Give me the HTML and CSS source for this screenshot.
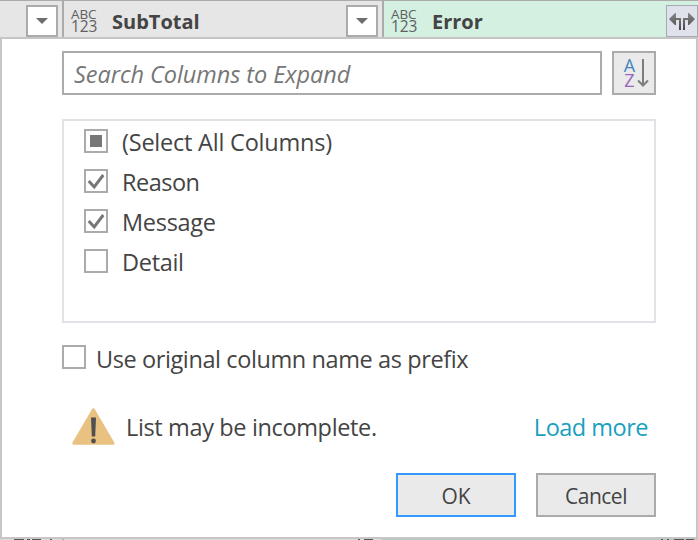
FILE: index.html
```html
<!DOCTYPE html>
<html lang="en">
<head>
<meta charset="utf-8">
<title>Expand Columns</title>
<link rel="stylesheet" href="styles.css">
</head>
<body>
<div class="window">
  <header class="columns">
    <div class="column first"><button class="drop" aria-label="Filter"><svg width="12" height="6" viewBox="0 0 12 6"><path d="M0 0h12L6 6z"/></svg></button></div>
    <div class="column subtotal">
      <span class="type"><span class="abc">ABC</span><span class="num">123</span></span>
      <span class="name sub-name">SubTotal</span>
      <button class="drop" aria-label="Filter"><svg width="12" height="6" viewBox="0 0 12 6"><path d="M0 0h12L6 6z"/></svg></button>
    </div>
    <div class="column error">
      <span class="type"><span class="abc">ABC</span><span class="num">123</span></span>
      <span class="name error-name">Error</span>
      <button class="expand" aria-label="Expand">
        <svg width="30" height="30" viewBox="0 0 30 30"><defs><linearGradient id="g" x2="0" y2="1"><stop stop-color="#898989"/><stop offset="1" stop-color="#444"/></linearGradient></defs><path fill="url(#g)" d="M2 13 8 7h1v5h5v12h-2V14H9v5H8zM28 13l-6-6h-1v5h-5v12h2V14h3v5h1z"/></svg>
      </button>
    </div>
  </header>
  <main class="panel">
    <div class="search-row">
      <div class="search"><span class="t-search">Search Columns to Expand</span></div>
      <button class="sort" aria-label="Sort">
        <span class="az"><span class="a">A</span><span class="z">Z</span></span>
        <svg width="12" height="30" viewBox="0 0 12 30"><path d="M6 1v27M1 22.5l5 5 5-5" fill="none" stroke="#7c7c7c" stroke-width="2"/></svg>
      </button>
    </div>
    <div class="list">
      <div class="item"><span class="check"><i class="partial"></i></span><span class="t-all">(Select All Columns)</span></div>
      <div class="item"><span class="check"><svg width="20" height="20" viewBox="0 0 20 20"><path d="m2.7 10 5.5 6L17.3 4"/></svg></span><span class="t-reason">Reason</span></div>
      <div class="item"><span class="check"><svg width="20" height="20" viewBox="0 0 20 20"><path d="m2.7 10 5.5 6L17.3 4"/></svg></span><span class="t-message">Message</span></div>
      <div class="item"><span class="check"></span><span class="t-detail">Detail</span></div>
    </div>
    <div class="prefix"><span class="check"></span><span class="t-prefix">Use original column name as prefix</span></div>
    <div class="notice">
      <svg width="44" height="38" viewBox="0 0 44 38"><path d="M21.4 1.7 41 35.3H1.8z" fill="#e9c282" stroke="#e9c282" stroke-width="3" stroke-linejoin="round"/><path d="M19 9.500h5l-.8 19h-3.4z" fill="#505050"/><circle cx="21.5" cy="33" r="2.4" fill="#505050"/></svg>
      <span class="t-list">List may be incomplete.</span>
      <a class="t-load">Load more</a>
    </div>
    <div class="actions"><button class="action ok"><span class="t-ok">OK</span></button><button class="action"><span class="t-cancel">Cancel</span></button></div>
  </main>
  <footer class="under"></footer>
</div>
</body>
</html>
```

FILE: styles.css
```css
* { box-sizing: border-box; }
body { margin: 0; font-family: "Open Sans", "Noto Sans", sans-serif; color: #444; background: #fff; }
button { padding: 0; font: inherit; color: inherit; border-radius: 0; }
svg { display: block; flex: none; }
span { white-space: nowrap; }
.window { width: 698px; height: 540px; overflow: hidden; }
.columns { display: flex; height: 37px; border-top: 1px solid #ababab; background: #e6e6e6; }
.column { display: flex; height: 36px; }
.first { width: 62px; padding: 4px 0 0 26px; }
.subtotal { width: 320px; border-left: 2px solid #ababab; }
.error { width: 316px; border-left: 2px solid #ababab; background: #d4f0e0; }
.drop { width: 32px; height: 32px; display: flex; align-items: center; justify-content: center; border: 2px solid #ababab; background: #fff; }
.drop path { fill: #6d6d6d; }
.subtotal .drop { margin: 4px 4px 0 auto; }
.expand { width: 32px; height: 32px; margin: 4px 0 0 auto; display: flex; align-items: center; justify-content: center; border: 1px solid #a4a9b2; background: #dfe2ea; }
.type { width: 27px; margin: 7px 0 0 7px; color: #606060; font-weight: 500; }
.abc, .num { display: block; height: 12px; line-height: 12px; }
.abc { font-size: 13.5px; letter-spacing: -.1px; }
.num { font-size: 15.5px; letter-spacing: -.1px; }
.name { margin-left: 14px; font-size: 20px; line-height: 41px; font-weight: 700; }
.panel { height: 502px; padding: 12px 40px 0 60px; border: 2px solid #c6c6c6; font-size: 23.5px; }
.search-row { display: flex; gap: 10px; height: 44px; }
.search { width: 540px; padding-left: 10px; border: 2px solid #ababab; color: #767676; font-style: italic; line-height: 43px; letter-spacing: -.06px; }
.sort { width: 44px; height: 44px; display: flex; align-items: center; padding-left: 9px; gap: 1px; border: 2px solid #ababab; background: #eaeaea; }
.az { width: 13px; text-align: center; font-size: 18px; line-height: 15px; font-weight: 500; }
.a, .z { display: block; height: 15px; }
.a { color: #4886bd; }
.z { color: #9868bd; }
.list { width: 594px; height: 204px; margin-top: 24px; padding: 1px 20px; border: 2px solid #dfe2e6; }
.item { height: 40px; display: flex; align-items: center; gap: 14px; line-height: 40px; letter-spacing: -.3px; }
.t-all { letter-spacing: -.22px; }
.t-reason { letter-spacing: -.5px; }
.check { width: 24px; height: 24px; flex: none; display: flex; align-items: center; justify-content: center; border: 2px solid #ababab; background: #fff; }
.item .check { margin-bottom: 3px; }
.partial { width: 12px; height: 12px; background: #777; }
.check path { fill: none; stroke: #777; stroke-width: 3; }
.prefix { display: flex; align-items: center; height: 40px; margin-top: 16px; gap: 10px; }
.prefix .check { margin-bottom: 4px; }
.t-prefix { letter-spacing: -.4px; margin-bottom: 1px; }
.notice { display: flex; align-items: center; height: 44px; margin-top: 26px; padding-left: 10px; }
.t-list { margin: 0 0 1px 10px; letter-spacing: -.36px; }
.t-load { margin: 0 0 1px auto; padding-right: 8px; color: #18a0bf; white-space: nowrap; letter-spacing: -.5px; }
.actions { display: flex; justify-content: flex-end; gap: 20px; margin-top: 24px; }
.action { width: 120px; height: 44px; border: 2px solid #ababab; background: #eaeaea; font-size: 21px; }
.t-ok, .t-cancel { position: relative; top: 1px; }
.t-cancel { letter-spacing: -.5px; }
.ok { border-color: #3399ff; }
.under { height: 1px; background: linear-gradient(90deg, #ddd 14px, #555 14px 24px, #ddd 24px 27px, #555 27px 30px, #ddd 30px 32px, #555 32px 41px, #ddd 41px 50px, #555 50px 52px, #ddd 52px 62px, #aaa 62px 64px, #ddd 64px 358px, #555 358px 360px, #ddd 360px 364px, #555 364px 373px, #ddd 373px 382px, #bac6bf 382px 661px, #555 661px 663px, #bac6bf 663px 667px, #555 667px 669px, #bac6bf 669px 674px, #555 674px 684px, #bac6bf 684px 686px, #555 686px 694px, #bac6bf 694px); }
```
